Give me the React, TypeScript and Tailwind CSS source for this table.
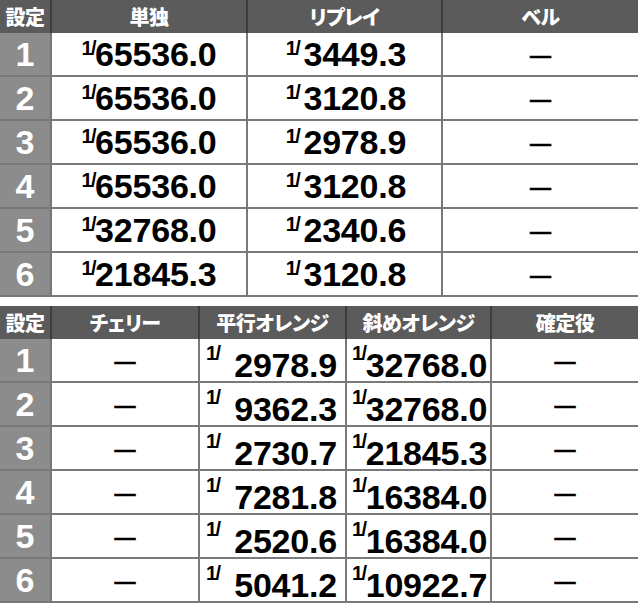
import React from 'react';

const jp = "font-['Noto_Sans_CJK_JP',sans-serif] [font-feature-settings:'palt']";
const num = "font-['Liberation_Sans',Arial,sans-serif]";

const TOP_ROWS = [
  ['1', '65536.0', '3449.3'],
  ['2', '65536.0', '3120.8'],
  ['3', '65536.0', '2978.9'],
  ['4', '65536.0', '3120.8'],
  ['5', '32768.0', '2340.6'],
  ['6', '21845.3', '3120.8'],
];

const BOTTOM_ROWS = [
  ['1', '2978.9', '32768.0'],
  ['2', '9362.3', '32768.0'],
  ['3', '2730.7', '21845.3'],
  ['4', '7281.8', '16384.0'],
  ['5', '2520.6', '16384.0'],
  ['6', '5041.2', '10922.7'],
];

const Head = ({ children, last }: { children: React.ReactNode; last?: boolean }) => (
  <div
    className={`h-[33px] flex items-center justify-center bg-[#5b5b5b] text-white text-[20px] font-black tracking-[-0.5px] ${jp} ${
      last ? '' : 'border-r-2 border-[#3c3c3c]'
    }`}
  >
    {children}
  </div>
);

const SettingCell = ({ n }: { n: string }) => (
  <div
    className={`h-[44px] flex items-center justify-center bg-[#8c8c8c] text-white text-[34px] font-bold leading-none border-r-2 border-b-2 border-[#777] ${num}`}
  >
    {n}
  </div>
);

const Dash = ({ last }: { last?: boolean }) => (
  <div
    className={`h-[44px] flex items-center justify-center bg-white border-b-2 border-[#7a7a7a] ${
      last ? '' : 'border-r-2'
    }`}
  >
    <span className={`text-[21px] font-black leading-none text-black [-webkit-text-stroke:0.6px_black] ${num}`}>—</span>
  </div>
);

const Sup = ({ className = '' }: { className?: string }) => (
  <span className={`text-[20px] font-bold leading-none text-black tracking-[-1.5px] ${num} ${className}`}>1/</span>
);

const Big = ({ children, className = '' }: { children: React.ReactNode; className?: string }) => (
  <span className={`text-[34px] font-bold leading-none text-black tracking-[-0.2px] ${num} ${className}`}>{children}</span>
);

export default function App() {
  return (
    <div className="w-[640px] h-[613px] bg-white">
      {/* 上段 */}
      <div className="w-[638px] grid grid-cols-[52px_196px_195px_195px]">
        <Head>設定</Head>
        <Head>単独</Head>
        <Head>リプレイ</Head>
        <Head last>ベル</Head>
        {TOP_ROWS.map((r) => (
          <React.Fragment key={r[0]}>
            <SettingCell n={r[0]} />
            <div className="h-[44px] flex items-center justify-center bg-white border-r-2 border-b-2 border-[#7a7a7a]">
              <div className="flex items-start">
                <Sup className="mt-[1px]" />
                <Big>{r[1]}</Big>
              </div>
            </div>
            <div className="h-[44px] flex items-center justify-center bg-white border-r-2 border-b-2 border-[#7a7a7a]">
              <div className="flex items-start gap-[4px] ml-[3px]">
                <Sup className="mt-[1px]" />
                <Big>{r[2]}</Big>
              </div>
            </div>
            <Dash last />
          </React.Fragment>
        ))}
      </div>

      <div className="h-[9px]" />

      {/* 下段 */}
      <div className="w-[638px] grid grid-cols-[52px_148px_147px_145px_146px]">
        <Head>設定</Head>
        <Head>チェリー</Head>
        <Head>平行オレンジ</Head>
        <Head>斜めオレンジ</Head>
        <Head last>確定役</Head>
        {BOTTOM_ROWS.map((r) => (
          <React.Fragment key={r[0]}>
            <SettingCell n={r[0]} />
            <Dash />
            <div className="h-[44px] flex items-start justify-between pl-[6px] pr-[8px] bg-white border-r-2 border-b-2 border-[#7a7a7a]">
              <Sup className="mt-[4px]" />
              <Big className="mt-[9px]">{r[1]}</Big>
            </div>
            <div className="h-[44px] flex items-start pl-[5px] bg-white border-r-2 border-b-2 border-[#7a7a7a]">
              <Sup className="mt-[4px]" />
              <Big className="mt-[9px]">{r[2]}</Big>
            </div>
            <Dash last />
          </React.Fragment>
        ))}
      </div>
    </div>
  );
}
